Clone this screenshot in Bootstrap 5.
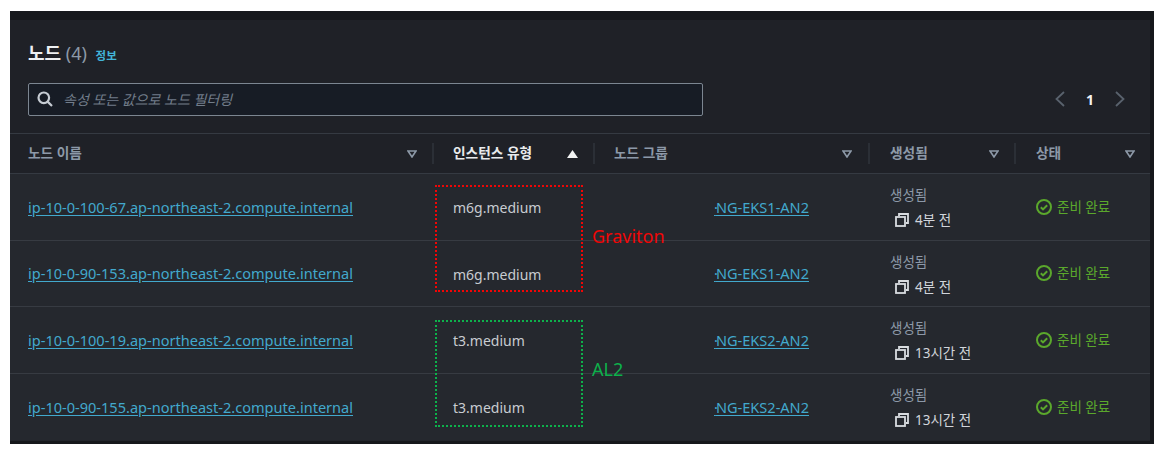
<!DOCTYPE html>
<html lang="ko"><head><meta charset="utf-8"><title>노드</title>
<link href="https://cdn.jsdelivr.net/npm/bootstrap@5.3.0/dist/css/bootstrap.min.css" rel="stylesheet">
<style>
html,body{background:#fff;height:100%}
body{font-family:"Noto Sans","Noto Sans CJK KR",sans-serif;font-size:14px;overflow:hidden}
.pane{position:relative;margin:11px 0 0 10px;width:1144px;height:433px;background:#16181c;padding:9px 4px 3px 0;color:#d1d5db}
.inner{background:#22252b;height:100%}
.head{height:113px;padding:19px 18px 0 18px;background:#1f2127}
.ttl{font-size:18px;font-weight:700;color:#eef0f2;line-height:28px;height:28px}
.cnt{font-weight:400;color:#8d99a8}
.inf{font-size:11.5px;font-weight:700;color:#42b4d8;margin-left:4px;vertical-align:0}
.filt{margin-top:15px;height:34px}
.sbox{width:675px;height:33px;background:#171c25;border:1px solid #7c8691;border-radius:2px;padding-left:8px}
.sbox span{font-size:14px;font-style:italic;color:#727d8a;margin-left:10px}
.pgr{margin-right:6px;gap:20px;font-weight:700;color:#f2f3f3;font-size:14px}
.tbl{table-layout:fixed;width:1140px;margin:0;border-collapse:collapse}
.tbl th{height:40px;background:#1f2127;border-top:1px solid #353a42;border-bottom:1px solid #353a42;font-weight:700;font-size:13.7px;color:#8d99a8;padding:0;vertical-align:middle}
.tbl td{height:66.6px;background:#25282e;border-bottom:1px solid #373b42;padding:0;vertical-align:middle;color:#c8ccd1;font-size:14px}
.tbl tr:last-child td{border-bottom:0}
.hc{height:21px;padding:0 0 0 19px;border-left:2px solid #2b2f36;justify-content:space-between}
.hc.first{border-left:0;padding-left:18px}
.hc.wide{padding-left:20px}
.hc.sorted{color:#e9ebed}
.lnk{color:#42a9cd;font-size:14.55px;text-decoration:underline;text-underline-offset:2px}
.dotmark{letter-spacing:-2px}
.tbl td.c1{padding:2px 0 0 18px}
.tbl td.c2{padding:2px 0 0 21px}
.tbl td.c3{padding:2px 0 0 121px}
.tbl td.c4{padding:0 0 0 22px}
.tbl td.c5{padding:0 0 0 22px}
.sub{font-size:13.5px;color:#8d99a8;line-height:19px;margin-top:3px}
.age{font-size:13.5px;color:#d1d5db;line-height:20px;margin:5px 0 0 5px;gap:6px}
.ok{color:#5ba82c;font-size:13.5px;gap:5px}
.anno{position:absolute;border:2px dotted;width:148px}
.ared{left:425px;top:174px;height:107px;border-color:#f00606}
.agrn{left:425px;top:309px;height:107px;border-color:#0db14b}
.alab{position:absolute;font-size:18px;line-height:20px}
.lred{left:582px;top:215px;color:#f00606}
.lgrn{left:582px;top:348px;color:#0db14b}
</style></head><body>
<div class="pane"><div class="inner">
 <div class="head">
  <div class="ttl">노드 <span class="cnt">(4)</span> <span class="inf">정보</span></div>
  <div class="filt d-flex justify-content-between align-items-center">
   <div class="sbox d-flex align-items-center">
    <svg width="16" height="16" viewBox="0 0 16 16" fill="none" stroke="#c6ccd3" stroke-width="2.2"><circle cx="6.8" cy="6.8" r="5.3"/><path d="M10.6 10.6L15 15"/></svg>
    <span>속성 또는 값으로 노드 필터링</span>
   </div>
   <div class="pgr d-flex align-items-center">
    <svg width="12" height="16" viewBox="0 0 12 16" fill="none" stroke="#59626d" stroke-width="1.8"><path d="M10 1L2.5 8l7.5 7"/></svg>
    <span>1</span>
    <svg width="12" height="16" viewBox="0 0 12 16" fill="none" stroke="#59626d" stroke-width="1.8"><path d="M2 1l7.5 7L2 15"/></svg>
   </div>
  </div>
 </div>
 <table class="tbl">
  <colgroup><col style="width:422px"><col style="width:161px"><col style="width:275px"><col style="width:146px"><col style="width:136px"></colgroup>
  <thead><tr>
   <th><div class="hc first d-flex align-items-center">노드 이름<svg width="10" height="8" viewBox="0 0 10 8" style="margin-right:15px" fill="none" stroke="#8d99a8" stroke-width="1.6"><path d="M1 1h8L5 7z"/></svg></div></th>
   <th><div class="hc sorted d-flex align-items-center">인스턴스 유형<svg width="11" height="8" viewBox="0 0 11 8" style="margin-right:15px" fill="#f2f3f3"><path d="M5.5 0L11 8H0z"/></svg></div></th>
   <th><div class="hc d-flex align-items-center">노드 그룹<svg width="10" height="8" viewBox="0 0 10 8" style="margin-right:16px" fill="none" stroke="#8d99a8" stroke-width="1.6"><path d="M1 1h8L5 7z"/></svg></div></th>
   <th><div class="hc wide d-flex align-items-center">생성됨<svg width="10" height="8" viewBox="0 0 10 8" style="margin-right:15px" fill="none" stroke="#8d99a8" stroke-width="1.6"><path d="M1 1h8L5 7z"/></svg></div></th>
   <th><div class="hc wide d-flex align-items-center">상태<svg width="10" height="8" viewBox="0 0 10 8" style="margin-right:15px" fill="none" stroke="#8d99a8" stroke-width="1.6"><path d="M1 1h8L5 7z"/></svg></div></th>
  </tr></thead>
  <tbody>
   <tr>
    <td class="c1"><a class="lnk" href="#">ip-10-0-100-67.ap-northeast-2.compute.internal</a></td><td class="c2">m6g.medium</td><td class="c3"><a class="lnk" href="#"><span class="dotmark">·</span>NG-EKS1-AN2</a></td>
    <td class="c4"><div class="sub">생성됨</div><div class="age d-flex align-items-center"><svg width="14" height="14" viewBox="0 0 14 14" fill="none" stroke="#d9dce0" stroke-width="1.8"><path d="M4 3V1h9v9h-2"/><rect x="1" y="4" width="9" height="9"/></svg>4분 전</div></td>
    <td class="c5"><div class="ok d-flex align-items-center"><svg width="16" height="16" viewBox="0 0 16 16" fill="none" stroke="#5ba82c" stroke-width="2"><circle cx="8" cy="8" r="7"/><path d="M4.8 8.2l2.2 2.2 4.2-4.2"/></svg>준비 완료</div></td>
   </tr>
   <tr>
    <td class="c1"><a class="lnk" href="#">ip-10-0-90-153.ap-northeast-2.compute.internal</a></td><td class="c2">m6g.medium</td><td class="c3"><a class="lnk" href="#"><span class="dotmark">·</span>NG-EKS1-AN2</a></td>
    <td class="c4"><div class="sub">생성됨</div><div class="age d-flex align-items-center"><svg width="14" height="14" viewBox="0 0 14 14" fill="none" stroke="#d9dce0" stroke-width="1.8"><path d="M4 3V1h9v9h-2"/><rect x="1" y="4" width="9" height="9"/></svg>4분 전</div></td>
    <td class="c5"><div class="ok d-flex align-items-center"><svg width="16" height="16" viewBox="0 0 16 16" fill="none" stroke="#5ba82c" stroke-width="2"><circle cx="8" cy="8" r="7"/><path d="M4.8 8.2l2.2 2.2 4.2-4.2"/></svg>준비 완료</div></td>
   </tr>
   <tr>
    <td class="c1"><a class="lnk" href="#">ip-10-0-100-19.ap-northeast-2.compute.internal</a></td><td class="c2">t3.medium</td><td class="c3"><a class="lnk" href="#"><span class="dotmark">·</span>NG-EKS2-AN2</a></td>
    <td class="c4"><div class="sub">생성됨</div><div class="age d-flex align-items-center"><svg width="14" height="14" viewBox="0 0 14 14" fill="none" stroke="#d9dce0" stroke-width="1.8"><path d="M4 3V1h9v9h-2"/><rect x="1" y="4" width="9" height="9"/></svg>13시간 전</div></td>
    <td class="c5"><div class="ok d-flex align-items-center"><svg width="16" height="16" viewBox="0 0 16 16" fill="none" stroke="#5ba82c" stroke-width="2"><circle cx="8" cy="8" r="7"/><path d="M4.8 8.2l2.2 2.2 4.2-4.2"/></svg>준비 완료</div></td>
   </tr>
   <tr>
    <td class="c1"><a class="lnk" href="#">ip-10-0-90-155.ap-northeast-2.compute.internal</a></td><td class="c2">t3.medium</td><td class="c3"><a class="lnk" href="#"><span class="dotmark">·</span>NG-EKS2-AN2</a></td>
    <td class="c4"><div class="sub">생성됨</div><div class="age d-flex align-items-center"><svg width="14" height="14" viewBox="0 0 14 14" fill="none" stroke="#d9dce0" stroke-width="1.8"><path d="M4 3V1h9v9h-2"/><rect x="1" y="4" width="9" height="9"/></svg>13시간 전</div></td>
    <td class="c5"><div class="ok d-flex align-items-center"><svg width="16" height="16" viewBox="0 0 16 16" fill="none" stroke="#5ba82c" stroke-width="2"><circle cx="8" cy="8" r="7"/><path d="M4.8 8.2l2.2 2.2 4.2-4.2"/></svg>준비 완료</div></td>
   </tr>
  </tbody>
 </table>
</div>
<div class="anno ared"></div><div class="alab lred">Graviton</div>
<div class="anno agrn"></div><div class="alab lgrn">AL2</div>
</div>
<script src="https://cdn.jsdelivr.net/npm/bootstrap@5.3.0/dist/js/bootstrap.bundle.min.js"></script>
</body></html>
